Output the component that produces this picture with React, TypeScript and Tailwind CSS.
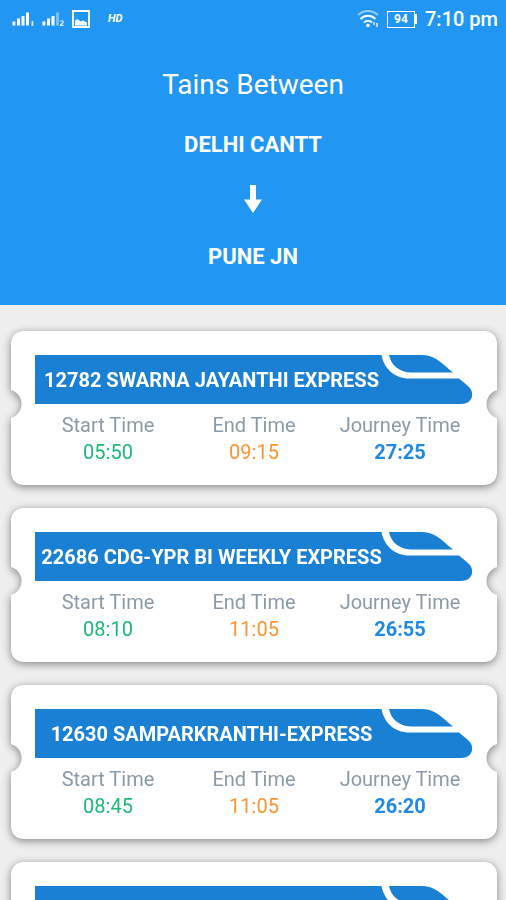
interface Train {
  name: string;
  times?: { start: string; end: string; journey: string };
}

const trains: Train[] = [
  { name: "12782 SWARNA JAYANTHI EXPRESS", times: { start: "05:50", end: "09:15", journey: "27:25" } },
  { name: "22686 CDG-YPR BI WEEKLY EXPRESS", times: { start: "08:10", end: "11:05", journey: "26:55" } },
  { name: "12630 SAMPARKRANTHI-EXPRESS", times: { start: "08:45", end: "11:05", journey: "26:20" } },
  { name: "" },
];

function StatusBar() {
  return (
    <div className="flex h-[38px] items-center justify-between pl-3 pr-2 text-white">
      <div className="flex items-center gap-2">
        {/* Signal, SIM 1 */}
        <svg className="h-4 w-[22px]" viewBox="0 0 22 16" fill="currentColor">
          <path d="M0.500 10.500h2.800v4H0.500zM5 7.500h3v7H5zM9.500 5h3v9.500h-3zM14 1.500h3v13h-3z" />
          <path d="M19.500 10h1.800v5h-1.800z" opacity="0.75" />
        </svg>
        {/* Signal, SIM 2 */}
        <svg className="h-4 w-[22px]" viewBox="0 0 22 16" fill="currentColor">
          <path d="M0.500 10.500h2.800v4H0.500zM5 7.500h3v7H5zM9.500 5h3v9.500h-3z" />
          <path d="M14 1.500h3v13h-3z" opacity="0.4" />
          <path d="M18.300 10.600c0-1.200 3-1.200 3 0.300 0 1.200-2.200 1.800-2.800 3.400h3" fill="none" stroke="currentColor" strokeWidth="1.200" opacity="0.85" />
        </svg>
        {/* Picture */}
        <svg className="h-[18px] w-[18px]" viewBox="0 0 18 18">
          <path d="M1 1h16v16H1z" fill="none" stroke="currentColor" strokeWidth="1.800" />
          <path d="M3 15.500v-5l2.500-1.500 3 2.500 2.500-1 4 2v3z" fill="currentColor" />
        </svg>
        <span className="pl-2.5 text-[11px] font-bold italic leading-4">HD</span>
      </div>

      <div className="flex items-center gap-2">
        <svg className="h-[18px] w-[22px]" viewBox="0 0 22 18" fill="none" stroke="currentColor" strokeWidth="2">
          <path d="M1 5C7-0.500 15-0.500 21 5" opacity="0.5" />
          <path d="M3.500 9C8 4.800 14 4.800 18.500 9" />
          <path d="M7 12.500c2.500-2.200 5.500-2.200 8 0" />
          <circle cx="11" cy="15.500" r="1.800" fill="currentColor" stroke="none" />
          <path d="M17 12v3M20 13v4" strokeWidth="1.600" opacity="0.8" />
        </svg>
        <div className="flex items-center">
          <span className="flex h-[17px] w-7 items-center justify-center border border-white text-[12px] font-bold leading-3">
            94
          </span>
          <span className="h-2.5 w-0.5 bg-white" />
        </div>
        <span className="text-xl font-medium leading-6">7:10 pm</span>
      </div>
    </div>
  );
}

function Header() {
  return (
    <header className="bg-[#2196f3] pb-[35px] text-white">
      <StatusBar />
      <div className="flex flex-col items-center pt-[31px]">
        <h1 className="text-[28px] leading-8">Tains Between</h1>
        <p className="mt-8 text-[22px] font-bold leading-6">DELHI CANTT</p>
        <svg className="mt-7 h-7 w-[18px]" viewBox="0 0 18 28" fill="currentColor">
          <path d="M6 0h6v14.500h6L9 28 0 14.500h6z" />
        </svg>
        <p className="mt-8 pb-px text-[22px] font-bold leading-6">PUNE JN</p>
      </div>
    </header>
  );
}

function TrainBanner({ name }: { name: string }) {
  return (
    <div className="flex h-[49px]">
      <h2 className="relative flex min-w-0 flex-1 items-center justify-center whitespace-nowrap bg-[#1a80d4] pl-2 text-xl font-bold text-white">
        {name}
      </h2>
      {/* Nose of the engine */}
      <svg className="h-[49px] w-[93px] shrink-0" viewBox="0 0 93 49" fill="#1a80d4">
        <path d="M0 0h1.500C4 14 15 23.500 29 23.500H79L88 31C96 38 92 49 81 49H0z" />
        <path d="M9 0h32C55 0 60 7 73 17.500H32C19 17.500 11 10 9 0z" />
      </svg>
    </div>
  );
}

function TimeColumn({ label, value, color }: { label: string; value: string; color: string }) {
  return (
    <div className="text-center text-xl leading-[27px]">
      <dt className="text-[#8c9aa8]">{label}</dt>
      <dd className={color}>{value}</dd>
    </div>
  );
}

function TrainCard({ train }: { train: Train }) {
  return (
    <li className="drop-shadow-[0_2px_4px_rgba(0,0,0,0.45)]">
      {/* Ticket with a notch cut in each side */}
      <article className="rounded-xl bg-white px-6 pb-[19px] pt-6 [mask-composite:intersect] [mask-image:radial-gradient(circle_at_-4px_73px,transparent_14px,black_15px),radial-gradient(circle_at_calc(100%_+_4px)_73px,transparent_14px,black_15px)]">
        <TrainBanner name={train.name} />
        <div className="mt-2 h-[54px]">
          {train.times && (
            <dl className="grid grid-cols-3">
              <TimeColumn label="Start Time" value={train.times.start} color="text-[#1db978]" />
              <TimeColumn label="End Time" value={train.times.end} color="text-[#fb9431]" />
              <TimeColumn label="Journey Time" value={train.times.journey} color="font-bold text-[#2088e5]" />
            </dl>
          )}
        </div>
      </article>
    </li>
  );
}

export default function App() {
  return (
    <div className="h-screen overflow-hidden bg-[#eeeeee] font-[Roboto,sans-serif]">
      <Header />
      <main className="pl-[11px] pr-[9px] pt-[26px]">
        <ul className="flex flex-col gap-[23px]">
          {trains.map((train, idx) => (
            <TrainCard key={idx} train={train} />
          ))}
        </ul>
      </main>
    </div>
  );
}
